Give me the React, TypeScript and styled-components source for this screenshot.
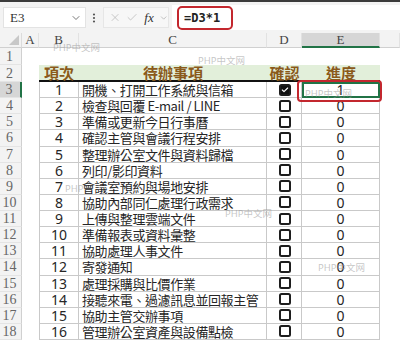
import React from 'react'
import styled, { createGlobalStyle, css } from 'styled-components'
import { ChevronDown, X, Check, EllipsisVertical } from 'lucide-react'

const GlobalStyle = createGlobalStyle`
  html, body {
    margin: 0;
    padding: 0;
    background: #ffffff;
  }
`

const COLS = '22px 17px 40px 188px 35px 78px 20px'
const ROW_H = 16.13

const tasks = [
  '開機、打開工作系統與信箱',
  '檢查與回覆 E-mail / LINE',
  '準備或更新今日行事曆',
  '確認主管與會議行程安排',
  '整理辦公室文件與資料歸檔',
  '列印/影印資料',
  '會議室預約與場地安排',
  '協助內部同仁處理行政需求',
  '上傳與整理雲端文件',
  '準備報表或資料彙整',
  '協助處理人事文件',
  '寄發通知',
  '處理採購與比價作業',
  '接聽來電、過濾訊息並回報主管',
  '協助主管交辦事項',
  '管理辦公室資產與設備點檢',
]

const Page = styled.div`
  width: 400px;
  height: 340px;
  overflow: hidden;
  background: #fff;
  font-family: 'Noto Sans CJK TC', 'Noto Sans', sans-serif;
`

const FormulaBar = styled.div`
  height: 31px;
  border-top: 2px solid #3b3b3b;
  background: #f3f3f3;
  display: flex;
  align-items: center;
  padding-left: 3px;
`

const NameBox = styled.div`
  width: 83px;
  height: 21px;
  background: #fff;
  border: 1px solid #e3e3e3;
  display: flex;
  align-items: center;
  justify-content: space-between;
  padding: 0 3px 0 6px;
  box-sizing: border-box;
  font-family: 'Liberation Serif', serif;
  font-size: 13px;
  color: #333;
`

const Dots = styled.div`
  width: 16px;
  display: flex;
  justify-content: center;
  color: #555;
`

const FxGroup = styled.div`
  width: 66px;
  height: 21px;
  background: #f7f7f7;
  border: 1px solid #e6e6e6;
  box-sizing: border-box;
  display: flex;
  align-items: center;
  gap: 5px;
  padding-left: 5px;
  margin-left: 1px;
`

const Fx = styled.span`
  font-family: 'Liberation Serif', serif;
  font-style: italic;
  font-size: 13px;
  color: #333;
  margin-left: 1px;
`

const FormulaInput = styled.div`
  flex: 1;
  height: 25px;
  background: #fff;
  margin-left: 3px;
  display: flex;
  align-items: center;
  padding-left: 5px;
`

const FormulaMark = styled.div`
  height: 24px;
  width: 56px;
  box-sizing: border-box;
  border: 2px solid #c3272e;
  border-radius: 5px;
  display: flex;
  align-items: center;
  padding-left: 5px;
  font-family: 'DejaVu Sans Mono', monospace;
  font-weight: bold;
  font-size: 12px;
  color: #222;
`

const Sheet = styled.div`
  position: relative;
  display: grid;
  grid-template-columns: ${COLS};
  grid-template-rows: 15px 17px 17px repeat(16, ${ROW_H}px);
`

const Corner = styled.div`
  background: #f3f3f3;
  border-right: 1px solid #dcdcdc;
  border-bottom: 1px solid #d0d0d0;
  position: relative;
  &::after {
    content: '';
    position: absolute;
    right: 2px;
    bottom: 2px;
    border-left: 10px solid transparent;
    border-bottom: 10px solid #c8c8c8;
  }
`

const ColHead = styled.div<{ $active?: boolean }>`
  background: ${(p) => (p.$active ? '#d6d6d6' : '#f3f3f3')};
  border-bottom: ${(p) => (p.$active ? '2px solid #217346' : '1px solid #d0d0d0')};
  border-right: 1px solid #e2e2e2;
  box-sizing: border-box;
  display: flex;
  align-items: center;
  justify-content: center;
  font-family: 'Liberation Serif', serif;
  font-size: 13px;
  line-height: 14px;
  color: #444;
`

const RowHead = styled.div<{ $active?: boolean }>`
  background: ${(p) => (p.$active ? '#d6d6d6' : '#f3f3f3')};
  border-right: ${(p) => (p.$active ? '2px solid #217346' : '1px solid #d0d0d0')};
  border-bottom: 1px solid #e4e4e4;
  box-sizing: border-box;
  display: flex;
  align-items: center;
  justify-content: center;
  padding-right: 2px;
  font-family: 'Liberation Serif', serif;
  font-size: 14px;
  line-height: 15px;
  color: #666;
`

const Blank = styled.div``

const TitleCell = styled.div`
  background: #e2efda;
  border-bottom: 2px solid #111;
  display: flex;
  align-items: center;
  justify-content: center;
  font-size: 15px;
  line-height: 16px;
  font-weight: bold;
  color: #8a5a1a;
`

const cellBase = css`
  border-right: 1px solid #c9c9c9;
  border-bottom: 1px solid #c9c9c9;
  display: flex;
  align-items: center;
  white-space: nowrap;
  line-height: 15px;
  color: #262626;
`

const NumCell = styled.div`
  ${cellBase}
  border-left: 1px solid #c9c9c9;
  justify-content: center;
  font-family: 'Noto Sans', sans-serif;
  font-size: 14px;
`

const TaskCell = styled.div`
  ${cellBase}
  padding-left: 3px;
  font-size: 13px;
  letter-spacing: -0.4px;
`

const CheckCell = styled.div`
  ${cellBase}
  justify-content: center;
  padding-left: 2px;
`

const Box = styled.div<{ $checked?: boolean }>`
  width: 12px;
  height: 12px;
  box-sizing: border-box;
  border: 2px solid #1d1d1d;
  border-radius: 2.5px;
  background: ${(p) => (p.$checked ? '#111' : '#fff')};
  display: flex;
  align-items: center;
  justify-content: center;
  color: #fff;
`

const ProgressCell = styled.div<{ $selected?: boolean }>`
  ${cellBase}
  justify-content: center;
  font-family: 'Noto Sans', sans-serif;
  font-size: 14px;
  ${(p) =>
    p.$selected &&
    css`
      outline: 2px solid #217346;
      outline-offset: -2px;
    `}
`

const RedMark = styled.div`
  position: absolute;
  left: 297px;
  top: 47px;
  width: 85px;
  height: 22px;
  box-sizing: border-box;
  border: 2px solid #c3272e;
  border-radius: 4px;
  pointer-events: none;
`

const Watermark = styled.div<{ $x: number; $y: number }>`
  position: absolute;
  left: ${(p) => p.$x}px;
  top: ${(p) => p.$y}px;
  font-family: 'Noto Sans', 'Noto Sans CJK SC', sans-serif;
  font-size: 9.5px;
  line-height: 11px;
  color: rgba(150, 150, 150, 0.55);
  white-space: nowrap;
  pointer-events: none;
`

export default function App() {
  const letters = ['A', 'B', 'C', 'D', 'E', '']

  return (
    <Page>
      <GlobalStyle />
      <FormulaBar>
        <NameBox>
          E3
          <ChevronDown size={12} color="#555" strokeWidth={1.6} />
        </NameBox>
        <Dots>
          <EllipsisVertical size={12} strokeWidth={2.4} />
        </Dots>
        <FxGroup>
          <X size={13} color="#b4b4b4" strokeWidth={1.4} />
          <Check size={13} color="#b4b4b4" strokeWidth={1.4} />
          <Fx>fx</Fx>
          <ChevronDown size={10} color="#999" strokeWidth={1.5} />
        </FxGroup>
        <FormulaInput>
          <FormulaMark>=D3*1</FormulaMark>
        </FormulaInput>
      </FormulaBar>

      <Sheet>
        <Corner />
        {letters.map((l, i) => (
          <ColHead key={i} $active={l === 'E'}>
            {l}
          </ColHead>
        ))}

        <RowHead>1</RowHead>
        {letters.map((_, i) => (
          <Blank key={i} />
        ))}

        <RowHead>2</RowHead>
        <Blank />
        <TitleCell>項次</TitleCell>
        <TitleCell>待辦事項</TitleCell>
        <TitleCell>確認</TitleCell>
        <TitleCell>進度</TitleCell>
        <Blank />

        {tasks.map((t, i) => (
          <React.Fragment key={i}>
            <RowHead $active={i === 0}>{i + 3}</RowHead>
            <Blank />
            <NumCell>{i + 1}</NumCell>
            <TaskCell>{t}</TaskCell>
            <CheckCell>
              <Box $checked={i === 0}>
                {i === 0 && <Check size={8} strokeWidth={3.5} />}
              </Box>
            </CheckCell>
            <ProgressCell $selected={i === 0}>{i === 0 ? 1 : 0}</ProgressCell>
            <Blank />
          </React.Fragment>
        ))}

        <RedMark />
        <Watermark $x={53} $y={9}>PHP中文网</Watermark>
        <Watermark $x={198} $y={22}>PHP中文网</Watermark>
        <Watermark $x={305} $y={55}>PHP中文网</Watermark>
        <Watermark $x={65} $y={150}>PHP</Watermark>
        <Watermark $x={225} $y={175}>PHP中文网</Watermark>
        <Watermark $x={318} $y={229}>PHP中文网</Watermark>
      </Sheet>
    </Page>
  )
}
